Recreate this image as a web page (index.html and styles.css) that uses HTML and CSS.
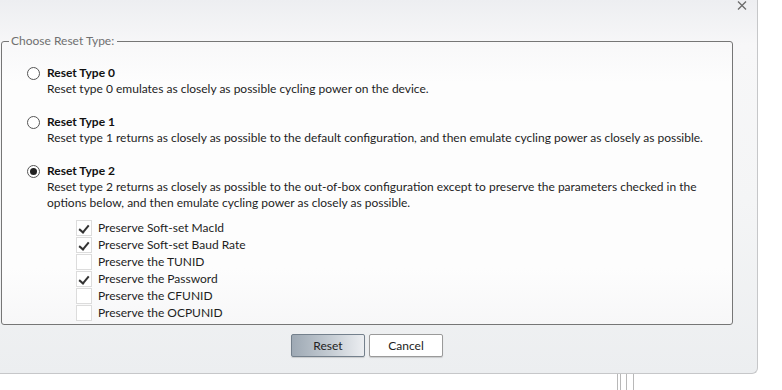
FILE: index.html
```html
<!DOCTYPE html>
<html>
<head>
    <link rel="stylesheet" href="styles.css">
</head>
<body>
    <div class="dialog">
        <svg class="close" width="10" height="9" viewBox="0 0 10 9">
            <path d="M1 0.5 L9 8.5 M9 0.5 L1 8.5" stroke="#6b6b6b" stroke-width="1.3" fill="none"/>
        </svg>

        <fieldset class="group">
            <legend>Choose Reset Type:</legend>

            <div class="option">
                <span class="radio"></span>
                <div class="option-text">
                    <div class="title">Reset Type 0</div>
                    <div class="desc">Reset type 0 emulates as closely as possible cycling power on the device.</div>
                </div>
            </div>

            <div class="option">
                <span class="radio"></span>
                <div class="option-text">
                    <div class="title">Reset Type 1</div>
                    <div class="desc">Reset type 1 returns as closely as possible to the default configuration, and then emulate cycling power as closely as possible.</div>
                </div>
            </div>

            <div class="option">
                <span class="radio checked"></span>
                <div class="option-text">
                    <div class="title">Reset Type 2</div>
                    <div class="desc">Reset type 2 returns as closely as possible to the out-of-box configuration except to preserve the parameters checked in the options below, and then emulate cycling power as closely as possible.</div>
                </div>
            </div>

            <ul class="checks">
                <li><span class="box checked"></span>Preserve Soft-set MacId</li>
                <li><span class="box checked"></span>Preserve Soft-set Baud Rate</li>
                <li><span class="box"></span>Preserve the TUNID</li>
                <li><span class="box checked"></span>Preserve the Password</li>
                <li><span class="box"></span>Preserve the CFUNID</li>
                <li><span class="box"></span>Preserve the OCPUNID</li>
            </ul>
        </fieldset>

        <div class="buttons">
            <button class="btn primary">Reset</button>
            <button class="btn">Cancel</button>
        </div>
    </div>

    <div class="behind">
        <span></span><span></span><span></span><span></span>
    </div>
</body>
</html>
```

FILE: styles.css
```css
body {
    margin: 0;
    background: #fff;
    font-family: "Segoe UI", "Lato", sans-serif;
    font-size: 12px;
    line-height: 16px;
    color: #1e1e1e;
    position: relative;
    height: 390px;
    overflow: hidden;
}

.dialog {
    position: relative;
    box-sizing: border-box;
    width: 758px;
    height: 374px;
    padding: 33px 0 0 1px;
    border-right: 1px solid #c6c7c9;
    border-bottom: 1px solid #c6c7c9;
    border-bottom-right-radius: 6px;
    background: linear-gradient(#edeef1 0, #f7f7f8 45px, #f4f5f6 200px, #eceef0 100%);
}

.close {
    position: absolute;
    top: 1px;
    right: 10px;
}

.group {
    box-sizing: border-box;
    width: 732px;
    height: 292px;
    margin: 0;
    padding: 16px 0 0 25px;
    border: 1px solid #767676;
    border-radius: 3px;
    background: linear-gradient(#f8f8f9, #fdfdfd 40px, #fdfdfd 80%, #f7f7f8);
}

.group legend {
    margin-left: -18px;
    padding: 0 3px 0 2px;
    color: #707070;
}

.option {
    display: flex;
    gap: 7px;
    margin-bottom: 17px;
}

.radio {
    box-sizing: border-box;
    flex: none;
    width: 13px;
    height: 13px;
    margin-top: 2px;
    border: 1px solid #555;
    border-radius: 50%;
    background: #fff;
    display: flex;
    align-items: center;
    justify-content: center;
}

.radio.checked::after {
    content: "";
    width: 7px;
    height: 7px;
    border-radius: 50%;
    background: #222;
}

.title {
    font-weight: bold;
    color: #111;
}

.desc {
    padding-right: 20px;
}

.checks {
    list-style: none;
    margin: -9px 0 0 49px;
    padding: 0;
}

.checks li {
    display: flex;
    align-items: center;
    height: 17px;
}

.box {
    box-sizing: border-box;
    width: 16px;
    height: 16px;
    margin-right: 6px;
    border: 1px solid #dcdcdc;
    background: #fff;
    position: relative;
}

.box.checked::after {
    content: "";
    position: absolute;
    left: 4px;
    top: 2px;
    width: 4px;
    height: 8px;
    border: solid #333;
    border-width: 0 2px 2px 0;
    transform: rotate(40deg);
}

.buttons {
    display: flex;
    justify-content: center;
    gap: 4px;
    width: 732px;
    margin-top: 9px;
}

.btn {
    box-sizing: border-box;
    width: 74px;
    height: 23px;
    padding: 0;
    font: inherit;
    color: #222;
    background: #fff;
    border: 1px solid #9a9a9a;
    border-radius: 2px;
    box-shadow: 0 1px 1px rgba(0, 0, 0, 0.15);
}

.btn.primary {
    border-color: #74808c;
    background: linear-gradient(90deg, #9ea9b4, #c6cdd4 55%, #eceef1);
}

.behind span {
    position: absolute;
    top: 374px;
    width: 1px;
    height: 16px;
    background: #b8b8b8;
}

.behind span:nth-child(1) { left: 617px; }
.behind span:nth-child(2) { left: 620px; }
.behind span:nth-child(3) { left: 626px; }
.behind span:nth-child(4) { left: 633px; }
```
